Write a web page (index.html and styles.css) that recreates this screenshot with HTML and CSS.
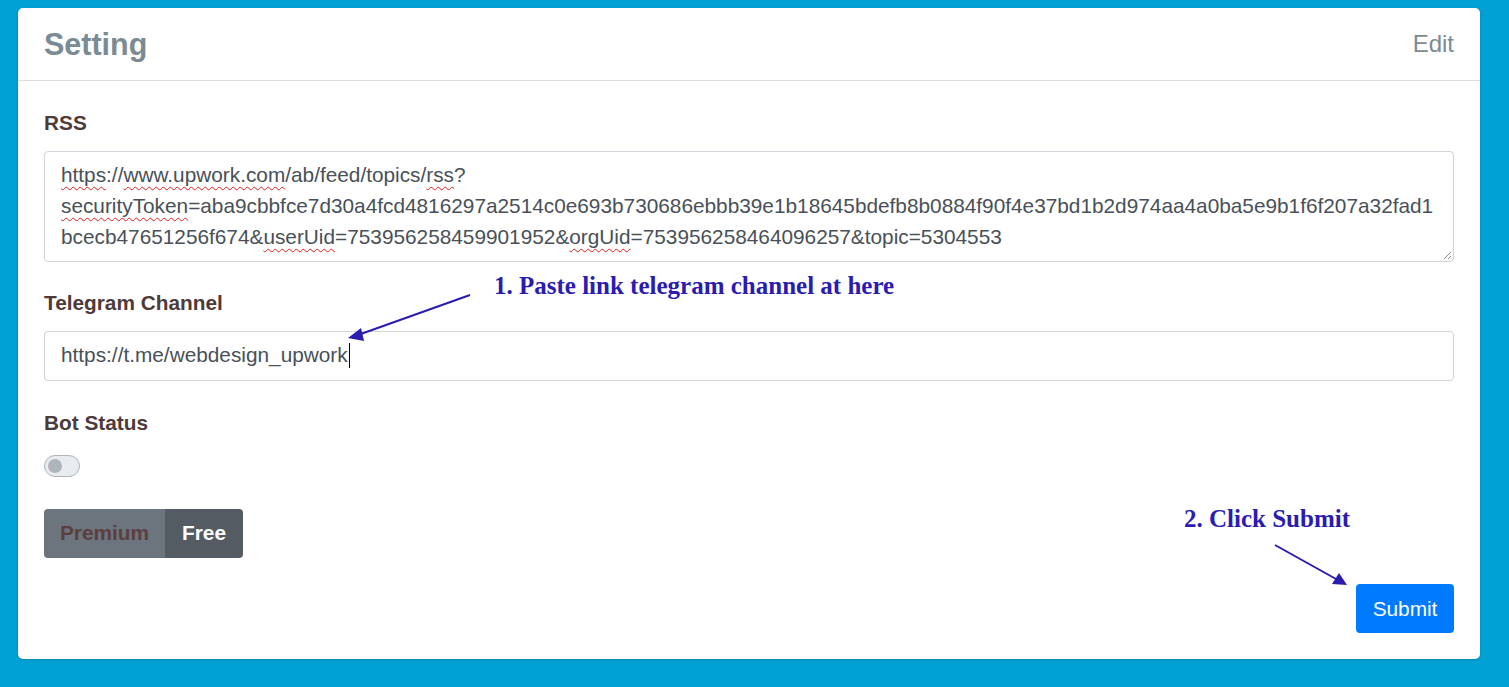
FILE: index.html
```html
<!DOCTYPE html>
<html lang="en">
<head>
<meta charset="utf-8">
<title>Setting</title>
<link rel="stylesheet" href="styles.css">
</head>
<body>
<div class="page">
  <div class="card">
    <div class="card-header">
      <h1 class="title">Setting</h1>
      <a class="edit" href="#">Edit</a>
    </div>
    <div class="card-body">
      <div class="group">
        <label class="label">RSS</label>
        <div class="textarea"><span class="sp">https</span>://<span class="sp">www.upwork.com</span>/ab/feed/topics/<span class="sp">rss</span>?<br><span class="sp">securityToken</span>=aba9cbbfce7d30a4fcd4816297a2514c0e693b730686ebbb39e1b18645bdefb8b0884f90f4e37bd1b2d974aa4a0ba5e9b1f6f207a32fad1<br>bcecb47651256f674&amp;<span class="sp">userUid</span>=753956258459901952&amp;<span class="sp">orgUid</span>=753956258464096257&amp;topic=5304553<svg class="grip" width="10" height="10" viewBox="0 0 10 10"><path d="M9 2 L2 9 M9 6 L6 9" stroke="#888" stroke-width="1"/></svg></div>
      </div>
      <div class="group">
        <label class="label">Telegram Channel</label>
        <div class="input">https://t.me/webdesign_upwork<span class="caret"></span></div>
      </div>
      <div class="group group-status">
        <label class="label">Bot Status</label>
        <div class="switch"><span class="knob"></span></div>
      </div>
      <div class="btn-group">
        <button class="seg seg-premium">Premium</button>
        <button class="seg seg-free">Free</button>
      </div>
      <div class="actions">
        <button class="submit">Submit</button>
      </div>
    </div>
    <div class="note note-1">1. Paste link telegram channel at here</div>
    <div class="note note-2">2. Click Submit</div>
    <svg class="arrows" width="1462" height="651" viewBox="0 0 1462 651">
      <line x1="452" y1="287" x2="340" y2="327" stroke="#2a1cb0" stroke-width="2"/>
      <polygon points="330,330 343,320 346,333" fill="#2a1cb0"/>
      <line x1="1257" y1="537" x2="1318" y2="571" stroke="#2a1cb0" stroke-width="2"/>
      <polygon points="1329,577 1314,576 1321,565" fill="#2a1cb0"/>
    </svg>
  </div>
</div>
</body>
</html>
```
FILE: styles.css
```css
* { box-sizing: border-box; }
html, body { margin: 0; padding: 0; }
body {
  background: #00a1d3;
  font-family: "Liberation Sans", Arial, sans-serif;
  height: 687px;
  overflow: hidden;
}
.page {
  padding: 8px 29px 0 18px;
}
.card {
  position: relative;
  background: #fff;
  border-radius: 5px;
  box-shadow: 0 1px 3px rgba(0,0,0,0.15);
}
.card-header {
  display: flex;
  justify-content: space-between;
  align-items: center;
  height: 73px;
  padding: 0 26px;
  border-bottom: 1px solid #dcdcdc;
}
.title {
  margin: 0;
  font-size: 30.5px;
  font-weight: bold;
  color: #7a8b94;
}
.edit {
  font-size: 24px;
  color: #7a8b94;
  text-decoration: none;
}
.card-body {
  padding: 28px 26px 26px;
}
.group {
  margin-bottom: 27px;
}
.label {
  display: block;
  font-size: 20.8px;
  font-weight: bold;
  line-height: 27px;
  color: #4e3a3a;
  margin-bottom: 15px;
}
.textarea {
  position: relative;
  height: 111px;
  border: 1px solid #ced4da;
  border-radius: 4px;
  padding: 7px 16px;
  font-size: 20.8px;
  line-height: 31px;
  color: #495057;
  white-space: nowrap;
  overflow: hidden;
}
.sp {
  text-decoration: underline wavy #e0201c;
  text-decoration-thickness: 1px;
  text-underline-offset: 4px;
}
.grip {
  position: absolute;
  right: 1px;
  bottom: 1px;
}
.input {
  height: 50px;
  border: 1px solid #ced4da;
  border-radius: 4px;
  padding: 0 16px 2px;
  display: flex;
  align-items: center;
  font-size: 20.8px;
  color: #495057;
}
.caret {
  display: inline-block;
  width: 1px;
  height: 25px;
  background: #000;
  margin-left: 1px;
}
.group-status { margin: 28px 0 0; }
.group-status .label { margin-bottom: 0; }
.switch {
  position: relative;
  width: 36px;
  height: 22px;
  border: 1px solid #adb5bd;
  border-radius: 11px;
  background: #e9ecef;
  margin-top: 19px;
  margin-bottom: 32px;
}
.knob {
  position: absolute;
  left: 3px;
  top: 3px;
  width: 14px;
  height: 14px;
  border-radius: 50%;
  background: #adb5bd;
}
.btn-group {
  display: flex;
}
.seg {
  border: 0;
  font-family: "Liberation Sans", Arial, sans-serif;
  font-size: 20.8px;
  font-weight: bold;
  height: 49px;
  padding: 0 0 2px;
}
.seg-premium {
  background: #6c757d;
  color: #5b3f3f;
  border-radius: 4px 0 0 4px;
  width: 121px;
}
.seg-free {
  background: #545b62;
  color: #fff;
  border-radius: 0 4px 4px 0;
  width: 78px;
}
.actions {
  display: flex;
  justify-content: flex-end;
  margin-top: 26px;
}
.submit {
  background: #007bff;
  color: #fff;
  border: 0;
  border-radius: 4px;
  font-family: "Liberation Sans", Arial, sans-serif;
  font-size: 20.8px;
  height: 49px;
  width: 98px;
  padding: 0;
}
.note {
  position: absolute;
  font-family: "Liberation Serif", "Times New Roman", serif;
  font-weight: bold;
  font-size: 25px;
  line-height: 1;
  color: #2a1cb0;
}
.note-1 { left: 476px; top: 265px; }
.note-2 { left: 1166px; top: 498px; }
.arrows {
  position: absolute;
  left: 0;
  top: 0;
  pointer-events: none;
}
```
